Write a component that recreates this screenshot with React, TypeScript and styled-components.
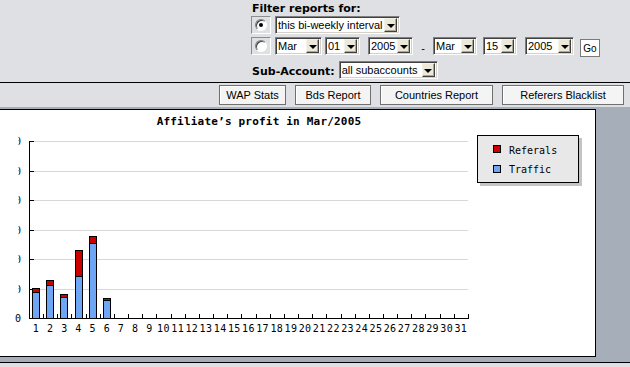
import React from "react";
import styled, { createGlobalStyle } from "styled-components";

const GlobalStyle = createGlobalStyle`
  html, body {
    margin: 0;
    padding: 0;
    background: #dfe0e3;
  }
`;

const Page = styled.div`
  width: 630px;
  height: 367px;
  overflow: hidden;
  background: #dfe0e3;
  font-family: "Liberation Sans", Arial, sans-serif;
  font-size: 11px;
  color: #000;
`;

const FilterArea = styled.div`
  height: 82px;
  box-sizing: border-box;
  padding-left: 251px;
  display: flex;
  flex-direction: column;
`;

const FilterTitle = styled.div`
  margin: 2px 0 0 1px;
  height: 12px;
  line-height: 12px;
  font: bold 11px "DejaVu Sans", Verdana, sans-serif;
`;

const Row = styled.div<{ $top: number }>`
  display: flex;
  align-items: center;
  height: 18px;
  margin-top: ${(p) => p.$top}px;
`;

const RadioFrame = styled.div`
  width: 20px;
  height: 18px;
  box-sizing: border-box;
  border: 1px solid;
  border-color: #8d8d8d #fff #fff #8d8d8d;
  display: flex;
  align-items: center;
  justify-content: center;
  margin-right: 4px;
`;

const Radio = styled.div<{ $checked?: boolean }>`
  width: 12px;
  height: 12px;
  box-sizing: border-box;
  border-radius: 50%;
  border: 1px solid;
  border-color: #808080 #fff #fff #808080;
  background: #fff;
  box-shadow: inset 1px 1px 0 #404040;
  position: relative;
  &::after {
    content: "";
    display: ${(p) => (p.$checked ? "block" : "none")};
    position: absolute;
    left: 3px;
    top: 3px;
    width: 4px;
    height: 4px;
    border-radius: 50%;
    background: #000;
  }
`;

const SelectBox = styled.div<{ $w: number; $gap?: number }>`
  width: ${(p) => p.$w}px;
  height: 18px;
  box-sizing: border-box;
  margin-right: ${(p) => p.$gap ?? 0}px;
  display: flex;
  align-items: center;
  background: #fff;
  border: 1px solid;
  border-color: #7f7f7f #fff #fff #7f7f7f;
  box-shadow: inset 1px 1px 0 #404040, inset -1px -1px 0 #d4d0c8;
  padding: 1px 2px 1px 2px;
`;

const SelectText = styled.span`
  flex: 1;
  white-space: nowrap;
  overflow: hidden;
  line-height: 14px;
`;

const ArrowButton = styled.span`
  flex: none;
  width: 13px;
  height: 14px;
  box-sizing: border-box;
  background: #ece9d8;
  border: 1px solid;
  border-color: #f4f2e8 #404040 #404040 #f4f2e8;
  box-shadow: inset -1px -1px 0 #aca899;
  display: flex;
  align-items: center;
  justify-content: center;
  &::after {
    content: "";
    width: 0;
    height: 0;
    border-left: 4px solid transparent;
    border-right: 4px solid transparent;
    border-top: 4px solid #000;
    margin-top: 1px;
  }
`;

const Dash = styled.span`
  width: 20px;
  text-align: center;
  line-height: 18px;
  padding-top: 4px;
`;

const GoButton = styled.div`
  margin-left: 6px;
  margin-top: 4px;
  width: 20px;
  height: 18px;
  box-sizing: border-box;
  border: 1px solid #7a7a7a;
  background: #fff;
  font-size: 10px;
  display: flex;
  align-items: center;
  justify-content: center;
`;

const Label = styled.span`
  font: bold 11px "DejaVu Sans", Verdana, sans-serif;
  margin: 2px 4px 0 1px;
`;

const Toolbar = styled.div`
  border-top: 1px solid #000;
  height: 25px;
  box-sizing: border-box;
  display: flex;
  justify-content: flex-end;
  align-items: flex-start;
  gap: 9px;
  padding: 2px 6px 0 0;
`;

const ToolButton = styled.div<{ $w: number }>`
  width: ${(p) => p.$w}px;
  height: 20px;
  box-sizing: border-box;
  border: 1px solid #6f6f6f;
  background: #f4f4f4;
  box-shadow: inset 1px 1px 0 #fff;
  display: flex;
  align-items: center;
  justify-content: center;
  font-size: 11px;
`;

const ChartArea = styled.div`
  background: #a6aeba;
  padding: 2px 0 5px;
  border-bottom: 1px solid #000;
`;

const ChartImage = styled.div`
  width: 596px;
  height: 248px;
  box-sizing: border-box;
  background: #fff;
  border: 1px solid #000;
  border-left: none;
`;

const MONO = `"DejaVu Sans Mono", "Liberation Mono", monospace`;

const traffic = [8.8, 11.2, 7.1, 14.2, 25.4, 6.1];
const referals = [1.4, 1.7, 1.0, 8.8, 2.4, 0.7];

const BASE = 208;
const STEP = 29.5;
const UNIT = STEP / 10;
const X0 = 29;
const CAT = 14.16;

function Chart() {
  const grid = [1, 2, 3, 4, 5, 6].map((k) => Math.round(BASE - STEP * k) + 0.5);
  const days = Array.from({ length: 31 }, (_, i) => i + 1);
  return (
    <svg width={595} height={246} style={{ display: "block" }}>
      <defs>
        <clipPath id="ylab">
          <rect x={18.6} y={0} width={20} height={246} />
        </clipPath>
      </defs>
      <text
        x={259}
        y={15}
        textAnchor="middle"
        fontFamily={MONO}
        fontWeight="bold"
        fontSize={11}
        letterSpacing={0.2}
      >
        Affiliate’s profit in Mar/2005
      </text>

      <g shapeRendering="crispEdges">
        {grid.map((y) => (
          <line key={y} x1={X0} x2={468} y1={y} y2={y} stroke="#d8d8d8" />
        ))}
        {grid.map((y) => (
          <line key={"t" + y} x1={X0} x2={X0 + 5} y1={y} y2={y} stroke="#000" />
        ))}
        <line x1={X0 + 0.5} x2={X0 + 0.5} y1={grid[5] - 0.5} y2={BASE + 1} stroke="#000" />
        <line x1={X0} x2={469} y1={BASE + 0.5} y2={BASE + 0.5} stroke="#000" />
        {days.map((d) => {
          const x = Math.round(X0 + CAT * d) + 0.5;
          return <line key={"x" + d} x1={x} x2={x} y1={BASE - 4} y2={BASE} stroke="#000" />;
        })}
        {traffic.map((t, i) => {
          const cx = X0 + CAT * (i + 0.5);
          const x = Math.round(cx - 4);
          const th = Math.round(t * UNIT);
          const rh = Math.max(1, Math.round(referals[i] * UNIT));
          return (
            <g key={i}>
              <rect x={x + 0.5} y={BASE - th - rh + 0.5} width={7} height={rh} fill="#cc0000" stroke="#000" />
              <rect x={x + 0.5} y={BASE - th + 0.5} width={7} height={th} fill="#6ea6f6" stroke="#000" />
            </g>
          );
        })}
      </g>

      <g fontFamily={MONO} fontSize={10}>
        <text x={21} y={BASE + 3.5} textAnchor="end">0</text>
        <g clipPath="url(#ylab)">
          {grid.map((y, k) => (
            <text key={y} x={21} y={y + 3.5} textAnchor="end">
              {(k + 1) * 10}
            </text>
          ))}
        </g>
        {days.map((d) => (
          <text key={d} x={X0 + CAT * (d - 0.5)} y={BASE + 14} textAnchor="middle" letterSpacing={0.4}>
            {d}
          </text>
        ))}
      </g>

      <g shapeRendering="crispEdges">
        <rect x={480} y={28} width={102} height={48} fill="#c4c4c4" />
        <rect x={477.5} y={25.5} width={101} height={47} fill="#e8e8e8" stroke="#000" />
        <rect x={493.5} y={35.5} width={7} height={7} fill="#cc0000" stroke="#000" />
        <rect x={493.5} y={55.5} width={7} height={7} fill="#6ea6f6" stroke="#000" />
      </g>
      <g fontFamily={MONO} fontSize={10}>
        <text x={509} y={43.5}>Referals</text>
        <text x={509} y={62.5}>Traffic</text>
      </g>
    </svg>
  );
}

function Select({ value, w, gap }: { value: string; w: number; gap?: number }) {
  return (
    <SelectBox $w={w} $gap={gap}>
      <SelectText>{value}</SelectText>
      <ArrowButton />
    </SelectBox>
  );
}

export default function App() {
  return (
    <Page>
      <GlobalStyle />
      <FilterArea>
        <FilterTitle>Filter reports for:</FilterTitle>
        <Row $top={2}>
          <RadioFrame>
            <Radio $checked />
          </RadioFrame>
          <Select value="this bi-weekly interval" w={125} />
        </Row>
        <Row $top={3}>
          <RadioFrame>
            <Radio />
          </RadioFrame>
          <Select value="Mar" w={47} gap={3} />
          <Select value="01" w={35} gap={8} />
          <Select value="2005" w={45} />
          <Dash>-</Dash>
          <Select value="Mar" w={44} gap={6} />
          <Select value="15" w={34} gap={8} />
          <Select value="2005" w={49} />
          <GoButton>Go</GoButton>
        </Row>
        <Row $top={6}>
          <Label>Sub-Account:</Label>
          <Select value="all subaccounts" w={99} />
        </Row>
      </FilterArea>
      <Toolbar>
        <ToolButton $w={67}>WAP Stats</ToolButton>
        <ToolButton $w={76}>Bds Report</ToolButton>
        <ToolButton $w={113}>Countries Report</ToolButton>
        <ToolButton $w={122}>Referers Blacklist</ToolButton>
      </Toolbar>
      <ChartArea>
        <ChartImage>
          <Chart />
        </ChartImage>
      </ChartArea>
    </Page>
  );
}
